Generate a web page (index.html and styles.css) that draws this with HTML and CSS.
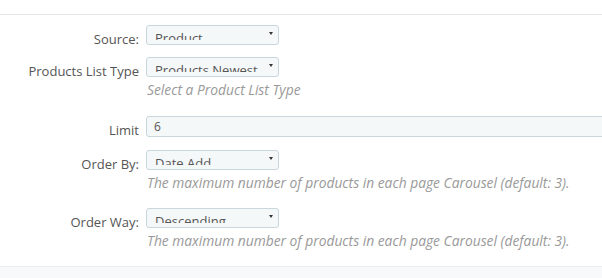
FILE: index.html
```html
<!DOCTYPE html>
<html lang="en">
<head>
    <meta charset="UTF-8">
    <title>Products List Settings</title>
    <link rel="stylesheet" href="styles.css">
</head>
<body>
    <div class="panel">
        <div class="form-body">
            <div class="form-row row-source">
                <label class="form-label">Source:</label>
                <div class="form-field">
                    <div class="fake-select"><span class="fake-select-text">Product</span><span class="caret"></span></div>
                </div>
            </div>

            <div class="form-row row-type">
                <label class="form-label">Products List Type</label>
                <div class="form-field">
                    <div class="fake-select"><span class="fake-select-text">Products Newest</span><span class="caret"></span></div>
                    <p class="help">Select a Product List Type</p>
                </div>
            </div>

            <div class="form-row row-limit">
                <label class="form-label">Limit</label>
                <div class="form-field">
                    <div class="text-input">6</div>
                </div>
            </div>

            <div class="form-row">
                <label class="form-label">Order By:</label>
                <div class="form-field">
                    <div class="fake-select"><span class="fake-select-text">Date Add</span><span class="caret"></span></div>
                    <p class="help">The maximum number of products in each page Carousel (default: 3).</p>
                </div>
            </div>

            <div class="form-row">
                <label class="form-label">Order Way:</label>
                <div class="form-field">
                    <div class="fake-select"><span class="fake-select-text">Descending</span><span class="caret"></span></div>
                    <p class="help">The maximum number of products in each page Carousel (default: 3).</p>
                </div>
            </div>
        </div>
        <div class="panel-footer"></div>
    </div>
</body>
</html>
```

FILE: styles.css
```css
body {
    margin: 0;
    background: #fff;
    font-family: 'Open Sans', 'Liberation Sans', sans-serif;
    color: #555;
    overflow: hidden;
}

.panel {
    width: 620px;
    border-top: 1px solid #e6e6e6;
    margin-top: 14px;
}

.form-body {
    padding-top: 10px;
}

.form-row {
    display: flex;
    align-items: flex-start;
    gap: 7px;
    margin-bottom: 16px;
}

.row-source {
    margin-bottom: 12px;
}

.row-type {
    margin-bottom: 17px;
}

.row-limit {
    margin-bottom: 13px;
}

.form-label {
    box-sizing: border-box;
    width: 139px;
    height: 20px;
    flex: none;
    text-align: right;
    font-size: 13px;
    line-height: 18px;
    padding-top: 5px;
    color: #555;
}

.form-field {
    flex: 1;
}

.fake-select {
    position: relative;
    box-sizing: border-box;
    width: 133px;
    height: 20px;
    padding: 6px 0 0 8px;
    background: #f5f8f9;
    border: 1px solid #c9d6db;
    border-radius: 3px;
}

.fake-select-text {
    display: block;
    height: 10px;
    overflow: hidden;
    font-size: 13px;
    line-height: 17px;
    margin-top: -2px;
    color: #555;
}

.caret {
    position: absolute;
    right: 5px;
    top: 6px;
    width: 0;
    height: 0;
    border-left: 2px solid transparent;
    border-right: 2px solid transparent;
    border-top: 3px solid #333;
}

.text-input {
    box-sizing: border-box;
    height: 21px;
    padding: 1px 7px;
    font-size: 12px;
    line-height: 17px;
    background: #f5f8f9;
    border: 1px solid #c9d6db;
    border-radius: 3px;
    color: #555;
}

.help {
    margin: 4px 0 0 1px;
    font-size: 13.8px;
    line-height: 18px;
    font-style: italic;
    color: #999;
}

.panel-footer {
    height: 20px;
    background: #f8f9fa;
    border-top: 1px solid #ebedef;
}
```
